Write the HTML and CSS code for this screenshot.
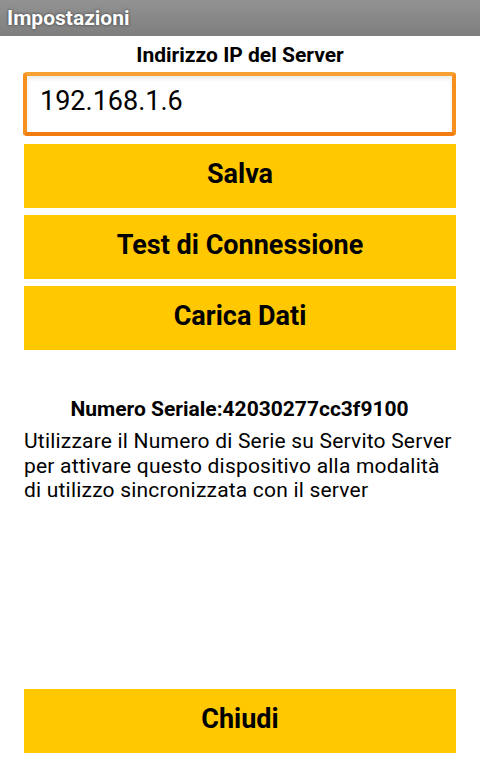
FILE: index.html
```html
<!DOCTYPE html>
<html lang="it">
<head>
  <meta charset="UTF-8">
  <title>Impostazioni</title>
  <link rel="stylesheet" href="styles.css">
</head>
<body>

  <div class="title-bar">Impostazioni</div>

  <div class="content">
    <div class="field-label">Indirizzo IP del Server</div>
    <div class="ip-box">192.168.1.6</div>

    <div class="btn">Salva</div>
    <div class="btn">Test di Connessione</div>
    <div class="btn">Carica Dati</div>

    <div class="serial">Numero Seriale:42030277cc3f9100</div>
    <p class="info">Utilizzare il Numero di Serie su Servito Server per attivare questo dispositivo alla modalità di utilizzo sincronizzata con il server</p>

    <div class="btn btn-close">Chiudi</div>
  </div>

</body>
</html>
```

FILE: styles.css
```css
* { margin: 0; padding: 0; box-sizing: border-box; }
html, body {
  width: 100%;
  height: 100%;
  background-color: white;
  font-family: Roboto, 'Noto Sans', sans-serif;
  color: black;
  overflow: hidden;
}
body {
  display: flex;
  flex-direction: column;
}
.title-bar {
  height: 36px;
  flex-shrink: 0;
  padding-left: 7px;
  line-height: 36px;
  font-size: 21px;
  font-weight: bold;
  color: white;
  background: linear-gradient(#929292, #7e7e7e);
  text-shadow: 0 0 3px rgba(0, 0, 0, 0.6);
}
.content {
  flex: 1;
  display: flex;
  flex-direction: column;
  padding: 7px 24px 8px 23px;
}
.field-label {
  text-align: center;
  font-size: 21px;
  font-weight: bold;
  line-height: 24px;
  padding-left: 1px;
}
.ip-box {
  margin-top: 5px;
  height: 64px;
  border: 4px solid #f7901e;
  border-top-color: #f9a032;
  border-bottom-color: #f27c0f;
  border-radius: 4px;
  padding: 0 0 6px 13px;
  display: flex;
  align-items: center;
  font-size: 27px;
  box-shadow: inset 0 3px 4px rgba(0, 0, 0, 0.08);
}
.btn {
  margin-top: 7px;
  margin-left: 1px;
  height: 64px;
  background-color: #ffc800;
  display: flex;
  align-items: center;
  justify-content: center;
  font-size: 27px;
  font-weight: bold;
  padding-bottom: 5px;
}
.ip-box + .btn { margin-top: 8px; }
.serial {
  margin-top: 47px;
  text-align: center;
  font-size: 21px;
  font-weight: bold;
  line-height: 24px;
}
.info {
  margin-top: 8px;
  padding-left: 1px;
  font-size: 21px;
  letter-spacing: 0.2px;
  line-height: 24.5px;
}
.btn-close {
  margin-top: auto;
}
```
